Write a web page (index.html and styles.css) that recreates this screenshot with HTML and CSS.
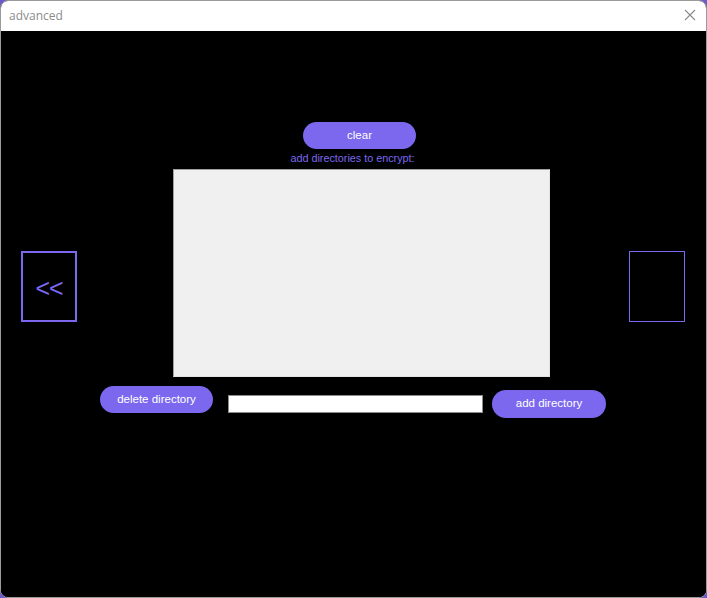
FILE: index.html
```html
<!DOCTYPE html>
<html>
<head>
<meta charset="utf-8">
<link rel="stylesheet" href="styles.css">
</head>
<body>
<div class="window">
  <div class="titlebar">
    <span class="title">advanced</span>
    <svg class="close" width="12" height="12" viewBox="0 0 12 12"><path d="M1 1L11 11M11 1L1 11" stroke="#8a8a8a" stroke-width="1.1" fill="none"/></svg>
  </div>
  <div class="content">
    <div class="main">
      <div class="nav-box left"><span>&lt;&lt;</span></div>
      <div class="center">
        <button class="pill clear">clear</button>
        <div class="label">add directories to encrypt:</div>
        <div class="listbox"></div>
      </div>
      <div class="nav-box right"></div>
    </div>
    <div class="bottom">
      <button class="pill delete">delete directory</button>
      <div class="entry"></div>
      <button class="pill add">add directory</button>
    </div>
  </div>
</div>
</body>
</html>
```
FILE: styles.css
```css
html, body { margin: 0; padding: 0; }
body { width: 707px; height: 598px; background: #6a5acd; overflow: hidden; font-family: "Liberation Sans", Arial, sans-serif; }
.window {
  width: 707px; height: 598px; box-sizing: border-box;
  border: 1px solid #9b9b9b; border-radius: 8px; overflow: hidden;
  background: #000; display: flex; flex-direction: column;
}
.titlebar {
  height: 30px; flex: none; background: #fff;
  display: flex; align-items: center; justify-content: space-between;
  padding: 0 10px 0 8px;
}
.title { color: #8c8c8c; font-size: 12px; font-family: "Open Sans", "Liberation Sans", sans-serif; margin-top: -2px; }
.close { margin-top: -2px; }
.content { flex: 1; background: #000; padding-top: 91px; }
.main { display: flex; align-items: flex-start; }
.nav-box {
  width: 56px; height: 71px; box-sizing: border-box; margin-top: 129px;
  display: flex; align-items: center; justify-content: center;
}
.nav-box.left { margin-left: 20px; border: 2px solid #7b68ee; }
.nav-box.left span { color: #7b68ee; font-size: 25px; font-family: "Liberation Sans", sans-serif; margin-top: 3px; letter-spacing: -1px; }
.nav-box.right { margin-left: 79px; border: 1px solid #7b68ee; }
.center { margin-left: 96px; display: flex; flex-direction: column; align-items: center; width: 377px; }
.pill {
  border: none; border-radius: 14px; background: #7b68ee; color: #fff;
  font-family: "Liberation Sans", Arial, sans-serif; font-size: 11.5px;
  height: 27px; width: 113px; padding: 0 0 2px 0;
}
.clear { margin-right: 4px; }
.label { color: #7b68ee; font-size: 10.8px; margin-top: 3px; margin-right: 18px; line-height: 13px; }
.listbox {
  margin-top: 4px; width: 377px; height: 208px; box-sizing: border-box; background: #f0f0f0;
  border: 1px solid #a0a0a0; border-right-color: #e3e3e3; border-bottom-color: #e3e3e3;
}
.bottom { display: flex; align-items: flex-start; margin-top: 8px; }
.delete { margin-left: 99px; margin-top: 1px; }
.entry { margin-left: 15px; margin-top: 10px; width: 255px; height: 18px; box-sizing: border-box; background: #fff; border: 1px solid #8c8c8c; }
.add { margin-left: 9px; margin-top: 5px; height: 28px; width: 114px; }
```
